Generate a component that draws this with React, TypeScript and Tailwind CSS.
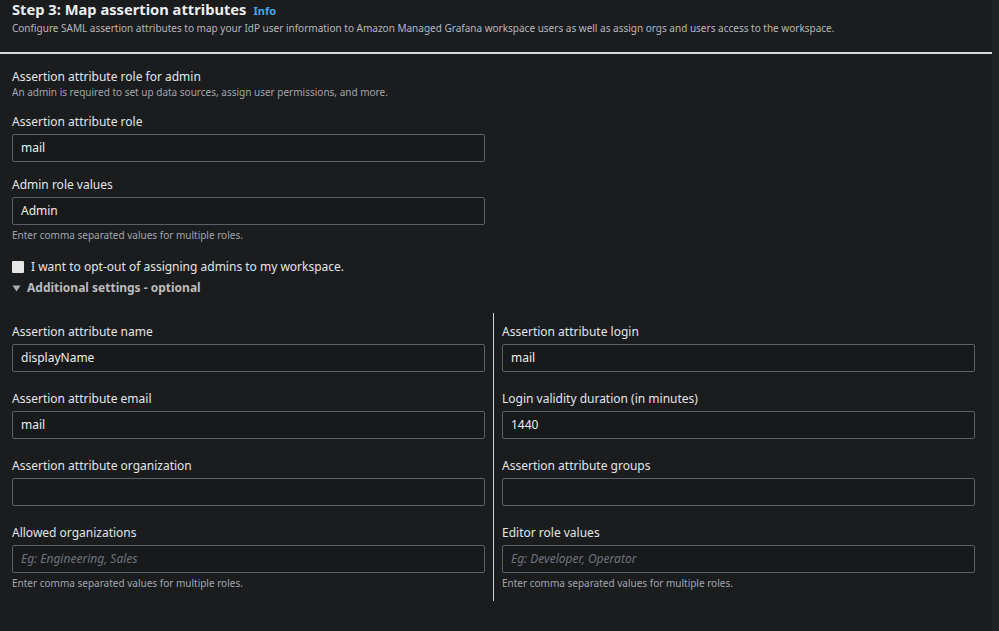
import React from "react";

function Field({
  label,
  value,
  placeholder,
  hint,
}: {
  label: string;
  value?: string;
  placeholder?: string;
  hint?: string;
}) {
  return (
    <div className="flex flex-col">
      <div className="h-[16px] text-[12px] leading-[16px] text-[#e3e5e8]">{label}</div>
      <div className="mt-[4px] flex h-[28px] items-center rounded-[2px] border border-[#5b6068] bg-[#18191b] px-[8px]">
        {value ? (
          <span className="text-[12px] text-[#eceef0]">{value}</span>
        ) : placeholder ? (
          <span className="text-[12px] italic text-[#6f747b]">{placeholder}</span>
        ) : null}
      </div>
      {hint && <div className="mt-[3px] text-[10px] leading-[14px] text-[#a1a5ab]">{hint}</div>}
    </div>
  );
}

export default function App() {
  return (
    <div
      className="flex h-[631px] w-[999px] bg-[#1b1c1e]"
      style={{ fontFamily: '"Noto Sans", "Open Sans", sans-serif' }}
    >
      <div className="flex-1">
        <div className="px-[12px]">
          <div className="flex items-baseline gap-[7px]">
            <h1 className="text-[14.7px] font-bold leading-[18px] text-[#eceef0]">
              Step 3: Map assertion attributes
            </h1>
            <span className="text-[11px] font-bold text-[#44a4f5]">Info</span>
          </div>
          <p className="mt-[1px] text-[10px] leading-[14px] text-[#b4b8bd]">
            Configure SAML assertion attributes to map your IdP user information to Amazon Managed
            Grafana workspace users as well as assign orgs and users access to the workspace.
          </p>
        </div>

        <div className="mt-[17px] h-[2px] bg-[#d5d8dc]" />

        <div className="px-[12px] pt-[15px]">
          <div className="text-[12px] leading-[16px] text-[#e3e5e8]">
            Assertion attribute role for admin
          </div>
          <div className="text-[10px] leading-[14px] text-[#a1a5ab]">
            An admin is required to set up data sources, assign user permissions, and more.
          </div>

          <div className="mt-[15px] flex w-[473px] flex-col gap-[15px]">
            <Field label="Assertion attribute role" value="mail" />
            <Field
              label="Admin role values"
              value="Admin"
              hint="Enter comma separated values for multiple roles."
            />
          </div>

          <label className="mt-[17px] flex items-center gap-[7px]">
            <span className="h-[12px] w-[12px] rounded-[1px] bg-[#e5e5e5]" />
            <span className="text-[12px] leading-[16px] text-[#e3e5e8]">
              I want to opt-out of assigning admins to my workspace.
            </span>
          </label>

          <div className="mt-[5px] flex items-center gap-[6px]">
            <svg width="9" height="8" viewBox="0 0 9 8">
              <path d="M0.5 1.5h8L4.5 7.5z" fill="#a9adb2" />
            </svg>
            <span className="text-[12px] font-bold leading-[16px] text-[#b9bcc0]">
              Additional settings - optional
            </span>
          </div>

          <div className="mt-[17px] grid grid-cols-[473px_1px_473px] gap-x-[8px]">
            <div className="flex flex-col gap-[19px] pt-[11px]">
              <Field label="Assertion attribute name" value="displayName" />
              <Field label="Assertion attribute email" value="mail" />
              <Field label="Assertion attribute organization" />
              <Field
                label="Allowed organizations"
                placeholder="Eg: Engineering, Sales"
                hint="Enter comma separated values for multiple roles."
              />
            </div>
            <div className="h-[288px] bg-[#d0d3d7]" />
            <div className="flex flex-col gap-[19px] pt-[11px]">
              <Field label="Assertion attribute login" value="mail" />
              <Field label="Login validity duration (in minutes)" value="1440" />
              <Field label="Assertion attribute groups" />
              <Field
                label="Editor role values"
                placeholder="Eg: Developer, Operator"
                hint="Enter comma separated values for multiple roles."
              />
            </div>
          </div>
        </div>
      </div>
      <div className="w-[7px] bg-[#1f2123]" />
    </div>
  );
}
